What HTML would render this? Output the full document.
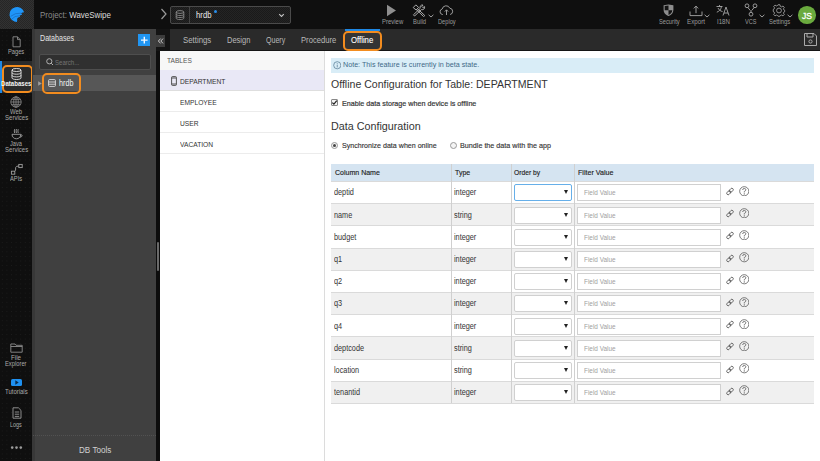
<!DOCTYPE html>
<html><head><meta charset="utf-8">
<style>
*{margin:0;padding:0;box-sizing:border-box}
html,body{width:820px;height:461px;overflow:hidden;background:#fff;font-family:"Liberation Sans",sans-serif}
.a{position:absolute}
.t{position:absolute;white-space:nowrap;line-height:1;transform-origin:0 0}
</style></head><body>
<div class="a" style="left:0;top:0;width:820px;height:29px;background:#0f0f0f"></div>
<div class="a" style="left:0;top:0;width:34px;height:29px;background:repeating-conic-gradient(#323232 0 25%,#262626 0 50%) 0 0/2px 2px"></div>
<svg class="a" style="left:0;top:0" width="34" height="29" viewBox="0 0 34 29">
<path d="M24.1 12.2 A7.5 7.5 0 1 0 17 22 L17.3 18.2 Q18.5 17.2 20.2 17.1 L19.6 15.8 Q20.8 14.9 22.2 14.8 L21.2 13.2 Q22.5 12.3 24.1 12.2 Z" fill="#1f95f8"/>
<path d="M21.2 13.2 Q15 12.6 10.6 16.4 M19.6 15.8 Q14.6 15.6 11.6 19.2" stroke="#1769bd" stroke-width="0.7" fill="none"/></svg>
<div class="t" style="left:39.80px;top:10.68px;font-size:9px;color:#8a8a8a;transform:scaleX(0.885)">Project: <span style="color:#dcdcdc">WaveSwipe</span></div>
<svg class="a" style="left:160px;top:8px" width="8" height="12" viewBox="0 0 8 12"><path d="M1.5 1 L6 6 L1.5 11" stroke="#9a9a9a" stroke-width="1.2" fill="none"/></svg>
<div class="a" style="left:170px;top:6px;width:121px;height:18px;border:1px solid #4a4a4a;border-radius:2px;background:repeating-conic-gradient(#242424 0 25%,#1a1a1a 0 50%) 0 0/2px 2px"></div>
<div class="a" style="left:189px;top:7px;width:1px;height:16px;background:#444"></div>
<svg class="a" style="left:175px;top:10px" width="10" height="10" viewBox="0 0 10 10"><g stroke="#8a8a8a" stroke-width="0.9" fill="none"><ellipse cx="5" cy="2" rx="3.8" ry="1.4"/><path d="M1.2 2v6.2c0 .8 1.7 1.4 3.8 1.4s3.8-.6 3.8-1.4V2M1.2 4.2c0 .8 1.7 1.4 3.8 1.4s3.8-.6 3.8-1.4M1.2 6.2c0 .8 1.7 1.4 3.8 1.4s3.8-.6 3.8-1.4"/></g></svg>
<div class="t" style="left:195.80px;top:11.08px;font-size:9px;color:#e8e8e8;transform:scaleX(0.861)">hrdb</div>
<div class="a" style="left:213.8px;top:10px;width:3px;height:3px;border-radius:50%;background:#2b8ee8"></div>
<svg class="a" style="left:278px;top:13px" width="7" height="5" viewBox="0 0 7 5"><path d="M1.2 1.2 L3.5 3.5 L5.8 1.2" stroke="#c8c8c8" stroke-width="1.1" fill="none"/></svg>
<svg class="a" style="left:386px;top:4px" width="11" height="13" viewBox="0 0 11 13"><path d="M1 0.8 L10 6.5 L1 12.2 Z" fill="#8f8f8f"/></svg>
<div class="t" style="left:381.60px;top:19.01px;font-size:6.6px;color:#9c9c9c;transform:scaleX(0.903)">Preview</div>
<svg class="a" style="left:412px;top:4px" width="15" height="13" viewBox="0 0 15 13"><g stroke="#a8a8a8" stroke-width="1" fill="none" stroke-linejoin="round"><path d="M5 4.2 L12.8 11.6 L11.6 12.6 L4 5.2"/><path d="M1.2 3.6 L3.8 0.9 L6.6 3.4 L4.2 6 Z"/><path d="M1.4 10.8 L8.2 4.4 M2.6 12 L9.4 5.6 M1.4 10.8 L2.6 12"/><path d="M8.2 4.4 C7.4 2.4 9 0.6 11 1 L9.8 2.6 L10.8 3.6 L12.6 2.6 C13 4.6 11.4 6.2 9.4 5.6"/></g></svg>
<svg class="a" style="left:428px;top:14px" width="6" height="4" viewBox="0 0 6 4"><path d="M0.6 0.8 L3 3 L5.4 0.8" stroke="#aaa" stroke-width="0.9" fill="none"/></svg>
<div class="t" style="left:412.70px;top:19.01px;font-size:6.6px;color:#9c9c9c;transform:scaleX(0.887)">Build</div>
<svg class="a" style="left:439px;top:4px" width="15" height="12" viewBox="0 0 15 12"><g stroke="#a8a8a8" stroke-width="0.9" fill="none"><path d="M4 10.5 H3.5 A2.8 2.8 0 0 1 3.2 5 A4 4 0 0 1 10.8 4.2 A3.2 3.2 0 0 1 11.2 10.5 H11"/><path d="M7.5 11 V6 M5.8 7.6 L7.5 5.8 L9.2 7.6"/></g></svg>
<div class="t" style="left:437.70px;top:19.01px;font-size:6.6px;color:#9c9c9c;transform:scaleX(0.862)">Deploy</div>
<svg class="a" style="left:662.5px;top:3.8px" width="11" height="12.5" viewBox="0 0 11 12.5"><path d="M0.6 1.2 L5.5 0.4 L10.4 1.2 V6 C10.4 9 8.2 11 5.5 12.1 C2.8 11 0.6 9 0.6 6 Z" fill="#8e8e8e"/><path d="M1.7 2.1 L5.5 1.6 V6.2 H1.7 Z M5.5 6.2 H9.3 C9.1 8.6 7.4 10.2 5.5 11 Z" fill="#141414"/></svg>
<div class="t" style="left:658.70px;top:19.01px;font-size:6.6px;color:#9c9c9c;transform:scaleX(0.869)">Security</div>
<svg class="a" style="left:689px;top:5px" width="14" height="12" viewBox="0 0 14 12"><g stroke="#a8a8a8" stroke-width="0.9" fill="none"><path d="M1 6.5 V10.6 H13 V6.5"/><path d="M7 8.2 V1.2 M4.8 3.4 L7 1.1 L9.2 3.4"/></g></svg>
<svg class="a" style="left:704px;top:14px" width="6" height="4" viewBox="0 0 6 4"><path d="M0.6 0.8 L3 3 L5.4 0.8" stroke="#aaa" stroke-width="0.9" fill="none"/></svg>
<div class="t" style="left:686.90px;top:19.01px;font-size:6.6px;color:#9c9c9c;transform:scaleX(0.941)">Export</div>
<svg class="a" style="left:716px;top:4px" width="14" height="12" viewBox="0 0 14 12"><g stroke="#a8a8a8" stroke-width="0.9" fill="none"><path d="M0.5 2.5 H6.5 M3.5 1 V2.5 M5.5 2.5 C5 5.5 3 7.5 0.8 8.2 M2 4 C3 6 4.5 7.2 6.5 7.5"/><path d="M7 11.5 L10 3 L13 11.5 M8 9 H12"/></g></svg>
<div class="t" style="left:716.70px;top:19.01px;font-size:6.6px;color:#9c9c9c;transform:scaleX(0.925)">I18N</div>
<svg class="a" style="left:744px;top:3px" width="14" height="14" viewBox="0 0 14 14"><g stroke="#a8a8a8" stroke-width="0.9" fill="none"><circle cx="3" cy="2.8" r="1.9"/><circle cx="11" cy="2.8" r="1.9"/><circle cx="7" cy="11.2" r="1.9"/><path d="M3.8 4.5 L6.3 7.5 M10.2 4.5 L7.7 7.5 M7 7.5 V9.3"/></g></svg>
<svg class="a" style="left:759px;top:14px" width="6" height="4" viewBox="0 0 6 4"><path d="M0.6 0.8 L3 3 L5.4 0.8" stroke="#aaa" stroke-width="0.9" fill="none"/></svg>
<div class="t" style="left:745.40px;top:19.01px;font-size:6.6px;color:#9c9c9c;transform:scaleX(0.847)">VCS</div>
<svg class="a" style="left:772px;top:4px" width="14" height="13" viewBox="0 0 14 14"><g stroke="#a8a8a8" stroke-width="0.9" fill="none"><path d="M6 0.8 H8 L8.4 2.5 L9.8 3.1 L11.3 2.2 L12.7 3.6 L11.8 5.1 L12.4 6.5 L13.2 7 V8 L12.4 8.5 L11.8 9.9 L12.7 11.4 L11.3 12.8 L9.8 11.9 L8.4 12.5 L8 13.2 H6 L5.6 12.5 L4.2 11.9 L2.7 12.8 L1.3 11.4 L2.2 9.9 L1.6 8.5 L0.8 8 V6 L1.6 5.5 L2.2 4.1 L1.3 2.6 L2.7 1.2 L4.2 2.1 L5.6 1.5 Z"/><circle cx="7" cy="7" r="2.6"/></g></svg>
<svg class="a" style="left:787px;top:14px" width="6" height="4" viewBox="0 0 6 4"><path d="M0.6 0.8 L3 3 L5.4 0.8" stroke="#aaa" stroke-width="0.9" fill="none"/></svg>
<div class="t" style="left:769.20px;top:19.01px;font-size:6.6px;color:#9c9c9c;transform:scaleX(0.889)">Settings</div>
<div class="a" style="left:798px;top:6px;width:17.5px;height:17.5px;border-radius:50%;background:#6aaa3e"></div>
<div class="t" style="left:802.00px;top:10.97px;font-size:9.6px;color:#fff;transform:scaleX(0.889);-webkit-text-stroke:0.3px #fff">JS</div>
<div class="a" style="left:0;top:29px;width:32px;height:432px;background:#0f0f0f radial-gradient(circle,#1c1c1c 0.7px,transparent 0.9px) 0 0/4.6px 4.6px"></div>
<div class="a" style="left:0;top:61px;width:32px;height:32px;background:#2b2b2b"></div>
<div class="a" style="left:0;top:61px;width:2px;height:32px;background:#1e88e5"></div>
<svg class="a" style="left:11.5px;top:36px" width="9" height="11.5" viewBox="0 0 9 11.5"><path d="M1 0.8 H5.5 L8.2 3.6 V10.8 H1 Z M5.5 0.8 V3.6 H8.2" stroke="#8c8c8c" stroke-width="0.9" fill="none"/></svg>
<div class="t" style="left:8.05px;top:48.21px;font-size:7.2px;color:#ababab;transform:scaleX(0.794)">Pages</div>
<svg class="a" style="left:11px;top:68px" width="11" height="12" viewBox="0 0 11 12"><g stroke="#e8e8e8" stroke-width="0.9" fill="none"><ellipse cx="5.5" cy="2" rx="4.5" ry="1.5"/><path d="M1 2 V10 C1 10.8 3 11.5 5.5 11.5 S10 10.8 10 10 V2 M1 4.7 C1 5.5 3 6.2 5.5 6.2 S10 5.5 10 4.7 M1 7.4 C1 8.2 3 8.9 5.5 8.9 S10 8.2 10 7.4"/></g></svg>
<div class="a" style="left:1.5px;top:64.5px;width:31px;height:28.5px;border:2px solid #f28c1f;border-radius:5px"></div>
<div class="t" style="left:1.05px;top:80.31px;font-size:7.2px;color:#f4f4f4;font-weight:bold;transform:scaleX(0.848)">Databases</div>
<svg class="a" style="left:10px;top:96px" width="12" height="12" viewBox="0 0 12 12"><g stroke="#8c8c8c" stroke-width="0.8" fill="none"><circle cx="6" cy="6" r="5.2"/><ellipse cx="6" cy="6" rx="2.3" ry="5.2"/><path d="M0.8 6 H11.2 M1.6 3.3 H10.4 M1.6 8.7 H10.4 M6 0.8 V11.2"/></g></svg>
<div class="t" style="left:10.30px;top:108.01px;font-size:7.2px;color:#ababab;transform:scaleX(0.819)">Web</div>
<div class="t" style="left:4.55px;top:114.31px;font-size:7.2px;color:#ababab;transform:scaleX(0.840)">Services</div>
<svg class="a" style="left:10px;top:128px" width="14" height="12" viewBox="0 0 14 12"><g stroke="#a0a0a0" stroke-width="0.9" fill="none"><path d="M2 6.3 H10.8 C10.8 9 8.8 10.8 6.4 10.8 S2 9 2 6.3 Z M10.6 7 C12 6.6 12.8 7.6 11.6 8.6 L9.8 9.4"/><path d="M4.6 1.2 Q4 2.8 4.6 5 M6.4 1 Q5.8 2.8 6.4 5 M8.2 1.2 Q7.6 2.8 8.2 5"/></g></svg>
<div class="t" style="left:10.30px;top:139.91px;font-size:7.2px;color:#ababab;transform:scaleX(0.790)">Java</div>
<div class="t" style="left:4.55px;top:145.81px;font-size:7.2px;color:#ababab;transform:scaleX(0.840)">Services</div>
<svg class="a" style="left:10px;top:163px" width="13" height="13" viewBox="0 0 13 13"><g stroke="#a0a0a0" stroke-width="0.9" fill="none"><rect x="1.4" y="8.2" width="3.4" height="3"/><rect x="8.8" y="1.4" width="3.4" height="3.2"/><path d="M4.8 8.2 L5.6 7.2 V4.6 Q5.8 3 8.8 3"/></g></svg>
<div class="t" style="left:10.05px;top:174.71px;font-size:7.2px;color:#ababab;transform:scaleX(0.802)">APIs</div>
<svg class="a" style="left:10px;top:343px" width="13" height="10" viewBox="0 0 13 10"><path d="M0.8 1 H5 L6 2.3 H12.2 V9.2 H0.8 Z M0.8 3.5 H12.2" stroke="#8c8c8c" stroke-width="0.9" fill="none"/></svg>
<div class="t" style="left:11.30px;top:354.21px;font-size:7.2px;color:#ababab;transform:scaleX(0.863)">File</div>
<div class="t" style="left:5.30px;top:360.01px;font-size:7.2px;color:#ababab;transform:scaleX(0.804)">Explorer</div>
<div class="a" style="left:11px;top:378.5px;width:11px;height:7.5px;border-radius:1.5px;background:#1e90f0"></div>
<svg class="a" style="left:15px;top:380px" width="4" height="5" viewBox="0 0 4 5"><path d="M0.3 0.3 L3.7 2.5 L0.3 4.7 Z" fill="#0b2b4a"/></svg>
<div class="t" style="left:4.80px;top:388.21px;font-size:7.2px;color:#ababab;transform:scaleX(0.830)">Tutorials</div>
<svg class="a" style="left:11.5px;top:407px" width="10" height="12" viewBox="0 0 10 12"><g stroke="#9a9a9a" stroke-width="0.9" fill="none"><path d="M1 0.8 H6.4 L9 3.4 V11.2 H1 Z"/><path d="M2.8 5 H7.2 M2.8 7.2 H7.2 M2.8 9.4 H7.2"/></g></svg>
<div class="t" style="left:10.30px;top:420.71px;font-size:7.2px;color:#ababab;transform:scaleX(0.750)">Logs</div>
<svg class="a" style="left:10px;top:445px" width="13" height="5" viewBox="0 0 13 5"><g fill="#9c9c9c"><circle cx="2.2" cy="2.6" r="1.3"/><circle cx="6.5" cy="2.6" r="1.3"/><circle cx="10.8" cy="2.6" r="1.3"/></g></svg>
<div class="a" style="left:32px;top:29px;width:124px;height:432px;background:#404040;border-left:3px solid #383838"></div>
<div class="t" style="left:39.90px;top:34.15px;font-size:8.8px;color:#e4e4e4;transform:scaleX(0.811)">Databases</div>
<div class="a" style="left:137.6px;top:33.8px;width:12.6px;height:12.3px;background:#2196f3"></div>
<svg class="a" style="left:137.6px;top:33.8px" width="12.6" height="12.3" viewBox="0 0 12.6 12.3"><path d="M6.3 2.8 V9.5 M3 6.15 H9.6" stroke="#f4f8ff" stroke-width="1.4"/></svg>
<div class="a" style="left:39.4px;top:53.7px;width:111.6px;height:16.2px;border:1px solid #4e4e4e;border-radius:2px;background:#303030"></div>
<svg class="a" style="left:45.5px;top:58px" width="7.5" height="7.5" viewBox="0 0 7.5 7.5"><g stroke="#b0b0b0" stroke-width="1" fill="none"><circle cx="3.3" cy="3.3" r="2.6"/><path d="M5.2 5.2 L7 7"/></g></svg>
<div class="t" style="left:54.80px;top:59.17px;font-size:7.6px;color:#747474;transform:scaleX(0.799)">Search...</div>
<div class="a" style="left:33px;top:75.3px;width:123px;height:15.4px;background:#575757"></div>
<svg class="a" style="left:37.8px;top:81px" width="4" height="5" viewBox="0 0 4 5"><path d="M0.2 0.2 L3.8 2.5 L0.2 4.8 Z" fill="#a0a0a0"/></svg>
<svg class="a" style="left:48.3px;top:79.2px" width="8" height="8" viewBox="0 0 8 8"><g stroke="#ddd" stroke-width="0.9" fill="none"><rect x="0.6" y="0.6" width="6.8" height="6.8" rx="0.8"/><path d="M0.6 3 H7.4 M0.6 5.2 H7.4"/></g></svg>
<div class="t" style="left:59.00px;top:79.32px;font-size:8.6px;color:#f2f2f2;transform:scaleX(0.838)">hrdb</div>
<div class="a" style="left:42px;top:73px;width:38.5px;height:20.8px;border:2px solid #f28c1f;border-radius:5px"></div>
<div class="a" style="left:33px;top:435px;width:123px;height:0;border-top:1px dotted #525252"></div>
<div class="t" style="left:78.70px;top:445.61px;font-size:9.2px;color:#d0d0d0;transform:scaleX(0.885)">DB Tools</div>
<div class="a" style="left:156px;top:29px;width:4px;height:432px;background:#0d0d0d"></div>
<div class="a" style="left:156.5px;top:242px;width:2px;height:29px;background:#6a6a6a;border-radius:1px"></div>
<div class="a" style="left:170px;top:29px;width:650px;height:22px;background:#2a2a2a;border-bottom:1.5px solid #151515"></div>
<div class="a" style="left:156px;top:29px;width:14px;height:22px;background:#141414"></div>
<div class="a" style="left:156px;top:35px;width:9px;height:11.8px;background:#3c3c3c"></div>
<svg class="a" style="left:156px;top:35px" width="9" height="12" viewBox="0 0 9 12"><path d="M4.6 3.6 L2.4 6 L4.6 8.4 M7 3.6 L4.8 6 L7 8.4" stroke="#c8c8c8" stroke-width="1" fill="none"/></svg>
<div class="t" style="left:182.80px;top:35.88px;font-size:9px;color:#b9b9b9;transform:scaleX(0.869)">Settings</div>
<div class="t" style="left:226.70px;top:35.88px;font-size:9px;color:#b9b9b9;transform:scaleX(0.832)">Design</div>
<div class="t" style="left:265.60px;top:35.88px;font-size:9px;color:#b9b9b9;transform:scaleX(0.784)">Query</div>
<div class="t" style="left:300.70px;top:35.88px;font-size:9px;color:#b9b9b9;transform:scaleX(0.848)">Procedure</div>
<div class="a" style="left:345px;top:29px;width:35px;height:2px;background:#1e88e5"></div>
<div class="a" style="left:345px;top:31px;width:35px;height:19px;background:#343434"></div>
<div class="t" style="left:351.20px;top:35.88px;font-size:9px;color:#fff;transform:scaleX(0.859);-webkit-text-stroke:0.1px #fff">Offline</div>
<div class="a" style="left:343px;top:31px;width:39.2px;height:19.5px;border:2px solid #f28c1f;border-radius:5px"></div>
<svg class="a" style="left:803px;top:32px" width="15" height="15" viewBox="0 0 15 15"><g stroke="#aaa" stroke-width="1" fill="none"><path d="M1.5 1.5 H11 L13.5 4 V13.5 H1.5 Z"/><path d="M4 1.5 V5 H10 V1.5"/><circle cx="7.5" cy="9.5" r="1.6"/></g></svg>
<div class="a" style="left:160px;top:51px;width:165px;height:18.5px;background:#f7f7f7"></div>
<div class="t" style="left:167.40px;top:56.71px;font-size:7.9px;color:#555;transform:scaleX(0.836)">TABLES</div>
<div class="a" style="left:160px;top:69.5px;width:164px;height:21.5px;background:#e9e8f6;border-bottom:1px solid #dedede"></div>
<svg class="a" style="left:171px;top:76px" width="6" height="10" viewBox="0 0 6 10"><g stroke="#444" stroke-width="0.9" fill="none"><rect x="0.6" y="0.6" width="4.8" height="8.8" rx="0.8"/><path d="M0.6 2 H5.4 M0.6 8 H5.4"/></g></svg>
<div class="t" style="left:180.00px;top:78.11px;font-size:7.9px;color:#333;transform:scaleX(0.844)">DEPARTMENT</div>
<div class="a" style="left:160px;top:91px;width:164px;height:21px;border-bottom:1px solid #ececec"></div>
<div class="t" style="left:180.00px;top:98.81px;font-size:7.9px;color:#333;transform:scaleX(0.844)">EMPLOYEE</div>
<div class="a" style="left:160px;top:112px;width:164px;height:21px;border-bottom:1px solid #ececec"></div>
<div class="t" style="left:180.00px;top:119.91px;font-size:7.9px;color:#333;transform:scaleX(0.844)">USER</div>
<div class="a" style="left:160px;top:132.5px;width:164px;height:21px;border-bottom:1px solid #ececec"></div>
<div class="t" style="left:180.00px;top:140.91px;font-size:7.9px;color:#333;transform:scaleX(0.844)">VACATION</div>
<div class="a" style="left:324px;top:51px;width:1px;height:410px;background:#dcdcdc"></div>
<div class="a" style="left:331px;top:58px;width:483px;height:14.5px;background:#d9edf7"></div>
<svg class="a" style="left:332.5px;top:61px" width="8.5" height="8.5" viewBox="0 0 9 9"><g stroke="#5a7e96" stroke-width="0.8" fill="none"><circle cx="4.5" cy="4.5" r="3.8"/><path d="M4.5 3.8 V6.8 M4.5 2.2 V3"/></g></svg>
<div class="t" style="left:342.70px;top:61.40px;font-size:7.8px;color:#3f6a88;transform:scaleX(0.917)">Note: This feature is currently in beta state.</div>
<div class="t" style="left:331.00px;top:78.51px;font-size:11.8px;color:#333;transform:scaleX(0.894)">Offline Configuration for Table: DEPARTMENT</div>
<div class="a" style="left:331px;top:98.5px;width:7px;height:7px;border:1px solid #888;border-radius:1px;background:#f4f4f4"></div>
<svg class="a" style="left:331px;top:98.5px" width="7" height="7" viewBox="0 0 7 7"><path d="M1.3 3.6 L2.9 5.2 L5.8 1.6" stroke="#222" stroke-width="1.2" fill="none"/></svg>
<div class="t" style="left:341.50px;top:99.54px;font-size:8.1px;color:#333;transform:scaleX(0.887);-webkit-text-stroke:0.2px #333">Enable data storage when device is offline</div>
<div class="t" style="left:330.90px;top:121.11px;font-size:11.8px;color:#333;transform:scaleX(0.911)">Data Configuration</div>
<div class="a" style="left:331px;top:141.5px;width:7px;height:7px;border:1px solid #999;border-radius:50%;background:#f4f4f4"></div>
<div class="a" style="left:333px;top:143.5px;width:3px;height:3px;border-radius:50%;background:#444"></div>
<div class="t" style="left:342.00px;top:142.34px;font-size:8.1px;color:#333;transform:scaleX(0.876);-webkit-text-stroke:0.15px #333">Synchronize data when online</div>
<div class="a" style="left:450px;top:141.5px;width:7px;height:7px;border:1px solid #999;border-radius:50%;background:#f4f4f4"></div>
<div class="t" style="left:460.20px;top:142.34px;font-size:8.1px;color:#333;transform:scaleX(0.888);-webkit-text-stroke:0.15px #333">Bundle the data with the app</div>
<div class="a" style="left:331px;top:164px;width:483px;height:17.5px;background:#d5e4f1"></div>
<div class="t" style="left:334.70px;top:169.04px;font-size:8.1px;color:#222;transform:scaleX(0.867);-webkit-text-stroke:0.15px #222">Column Name</div>
<div class="t" style="left:454.60px;top:169.04px;font-size:8.1px;color:#222;transform:scaleX(0.867);-webkit-text-stroke:0.15px #222">Type</div>
<div class="t" style="left:514.40px;top:169.04px;font-size:8.1px;color:#222;transform:scaleX(0.829);-webkit-text-stroke:0.15px #222">Order by</div>
<div class="t" style="left:577.80px;top:169.04px;font-size:8.1px;color:#222;transform:scaleX(0.877);-webkit-text-stroke:0.15px #222">Filter Value</div>
<div class="a" style="left:331px;top:181.0px;width:483px;height:23px;border-top:1px solid #dadada;background:#fff"></div>
<div class="t" style="left:333.90px;top:188.40px;font-size:8.5px;color:#333;transform:scaleX(0.858)">deptid</div>
<div class="t" style="left:453.90px;top:188.40px;font-size:8.5px;color:#333;transform:scaleX(0.858)">integer</div>
<div class="a" style="left:514px;top:184.3px;width:57.5px;height:17px;border:1px solid #66afe9;border-radius:2px;background:#fff"></div>
<div class="a" style="left:563.5px;top:190.3px;width:0;height:0;border-left:2.5px solid transparent;border-right:2.5px solid transparent;border-top:4px solid #222"></div>
<div class="a" style="left:577.3px;top:184.3px;width:143.7px;height:17px;border:1px solid #d0d0d0;background:#fff"></div>
<div class="t" style="left:583.80px;top:189.34px;font-size:7.4px;color:#a0a0a0;transform:scaleX(0.867)">Field Value</div>
<svg class="a" style="left:725px;top:187.0px" width="10" height="9" viewBox="0 0 10 9"><g transform="rotate(-45 5 4.5)" stroke="#555" stroke-width="0.85" fill="none"><rect x="1" y="3.1" width="4.6" height="2.8" rx="1.4"/><rect x="4.4" y="3.1" width="4.6" height="2.8" rx="1.4"/></g></svg>
<svg class="a" style="left:738.5px;top:185.5px" width="10.5" height="10.5" viewBox="0 0 11 11"><g stroke="#555" stroke-width="0.8" fill="none"><circle cx="5.5" cy="5.5" r="4.8"/><path d="M3.8 4.2 Q3.8 2.6 5.5 2.6 Q7.2 2.6 7.2 4 Q7.2 5 5.5 5.8 V6.8"/></g><circle cx="5.5" cy="8.3" r="0.6" fill="#555"/></svg>
<div class="a" style="left:331px;top:203.2px;width:483px;height:23px;border-top:1px solid #dadada;background:#f0f0f0"></div>
<div class="t" style="left:333.90px;top:210.60px;font-size:8.5px;color:#333;transform:scaleX(0.858)">name</div>
<div class="t" style="left:453.90px;top:210.60px;font-size:8.5px;color:#333;transform:scaleX(0.858)">string</div>
<div class="a" style="left:514px;top:206.5px;width:57.5px;height:17px;border:1px solid #d0d0d0;border-radius:2px;background:#fff"></div>
<div class="a" style="left:563.5px;top:212.5px;width:0;height:0;border-left:2.5px solid transparent;border-right:2.5px solid transparent;border-top:4px solid #222"></div>
<div class="a" style="left:577.3px;top:206.5px;width:143.7px;height:17px;border:1px solid #d0d0d0;background:#fff"></div>
<div class="t" style="left:583.80px;top:211.54px;font-size:7.4px;color:#a0a0a0;transform:scaleX(0.867)">Field Value</div>
<svg class="a" style="left:725px;top:209.2px" width="10" height="9" viewBox="0 0 10 9"><g transform="rotate(-45 5 4.5)" stroke="#555" stroke-width="0.85" fill="none"><rect x="1" y="3.1" width="4.6" height="2.8" rx="1.4"/><rect x="4.4" y="3.1" width="4.6" height="2.8" rx="1.4"/></g></svg>
<svg class="a" style="left:738.5px;top:207.7px" width="10.5" height="10.5" viewBox="0 0 11 11"><g stroke="#555" stroke-width="0.8" fill="none"><circle cx="5.5" cy="5.5" r="4.8"/><path d="M3.8 4.2 Q3.8 2.6 5.5 2.6 Q7.2 2.6 7.2 4 Q7.2 5 5.5 5.8 V6.8"/></g><circle cx="5.5" cy="8.3" r="0.6" fill="#555"/></svg>
<div class="a" style="left:331px;top:225.4px;width:483px;height:23px;border-top:1px solid #dadada;background:#fff"></div>
<div class="t" style="left:333.90px;top:232.80px;font-size:8.5px;color:#333;transform:scaleX(0.858)">budget</div>
<div class="t" style="left:453.90px;top:232.80px;font-size:8.5px;color:#333;transform:scaleX(0.858)">integer</div>
<div class="a" style="left:514px;top:228.7px;width:57.5px;height:17px;border:1px solid #d0d0d0;border-radius:2px;background:#fff"></div>
<div class="a" style="left:563.5px;top:234.7px;width:0;height:0;border-left:2.5px solid transparent;border-right:2.5px solid transparent;border-top:4px solid #222"></div>
<div class="a" style="left:577.3px;top:228.7px;width:143.7px;height:17px;border:1px solid #d0d0d0;background:#fff"></div>
<div class="t" style="left:583.80px;top:233.74px;font-size:7.4px;color:#a0a0a0;transform:scaleX(0.867)">Field Value</div>
<svg class="a" style="left:725px;top:231.4px" width="10" height="9" viewBox="0 0 10 9"><g transform="rotate(-45 5 4.5)" stroke="#555" stroke-width="0.85" fill="none"><rect x="1" y="3.1" width="4.6" height="2.8" rx="1.4"/><rect x="4.4" y="3.1" width="4.6" height="2.8" rx="1.4"/></g></svg>
<svg class="a" style="left:738.5px;top:229.9px" width="10.5" height="10.5" viewBox="0 0 11 11"><g stroke="#555" stroke-width="0.8" fill="none"><circle cx="5.5" cy="5.5" r="4.8"/><path d="M3.8 4.2 Q3.8 2.6 5.5 2.6 Q7.2 2.6 7.2 4 Q7.2 5 5.5 5.8 V6.8"/></g><circle cx="5.5" cy="8.3" r="0.6" fill="#555"/></svg>
<div class="a" style="left:331px;top:247.6px;width:483px;height:23px;border-top:1px solid #dadada;background:#f0f0f0"></div>
<div class="t" style="left:333.90px;top:255.00px;font-size:8.5px;color:#333;transform:scaleX(0.858)">q1</div>
<div class="t" style="left:453.90px;top:255.00px;font-size:8.5px;color:#333;transform:scaleX(0.858)">integer</div>
<div class="a" style="left:514px;top:250.9px;width:57.5px;height:17px;border:1px solid #d0d0d0;border-radius:2px;background:#fff"></div>
<div class="a" style="left:563.5px;top:256.9px;width:0;height:0;border-left:2.5px solid transparent;border-right:2.5px solid transparent;border-top:4px solid #222"></div>
<div class="a" style="left:577.3px;top:250.9px;width:143.7px;height:17px;border:1px solid #d0d0d0;background:#fff"></div>
<div class="t" style="left:583.80px;top:255.94px;font-size:7.4px;color:#a0a0a0;transform:scaleX(0.867)">Field Value</div>
<svg class="a" style="left:725px;top:253.6px" width="10" height="9" viewBox="0 0 10 9"><g transform="rotate(-45 5 4.5)" stroke="#555" stroke-width="0.85" fill="none"><rect x="1" y="3.1" width="4.6" height="2.8" rx="1.4"/><rect x="4.4" y="3.1" width="4.6" height="2.8" rx="1.4"/></g></svg>
<svg class="a" style="left:738.5px;top:252.1px" width="10.5" height="10.5" viewBox="0 0 11 11"><g stroke="#555" stroke-width="0.8" fill="none"><circle cx="5.5" cy="5.5" r="4.8"/><path d="M3.8 4.2 Q3.8 2.6 5.5 2.6 Q7.2 2.6 7.2 4 Q7.2 5 5.5 5.8 V6.8"/></g><circle cx="5.5" cy="8.3" r="0.6" fill="#555"/></svg>
<div class="a" style="left:331px;top:269.8px;width:483px;height:23px;border-top:1px solid #dadada;background:#fff"></div>
<div class="t" style="left:333.90px;top:277.20px;font-size:8.5px;color:#333;transform:scaleX(0.858)">q2</div>
<div class="t" style="left:453.90px;top:277.20px;font-size:8.5px;color:#333;transform:scaleX(0.858)">integer</div>
<div class="a" style="left:514px;top:273.1px;width:57.5px;height:17px;border:1px solid #d0d0d0;border-radius:2px;background:#fff"></div>
<div class="a" style="left:563.5px;top:279.1px;width:0;height:0;border-left:2.5px solid transparent;border-right:2.5px solid transparent;border-top:4px solid #222"></div>
<div class="a" style="left:577.3px;top:273.1px;width:143.7px;height:17px;border:1px solid #d0d0d0;background:#fff"></div>
<div class="t" style="left:583.80px;top:278.14px;font-size:7.4px;color:#a0a0a0;transform:scaleX(0.867)">Field Value</div>
<svg class="a" style="left:725px;top:275.8px" width="10" height="9" viewBox="0 0 10 9"><g transform="rotate(-45 5 4.5)" stroke="#555" stroke-width="0.85" fill="none"><rect x="1" y="3.1" width="4.6" height="2.8" rx="1.4"/><rect x="4.4" y="3.1" width="4.6" height="2.8" rx="1.4"/></g></svg>
<svg class="a" style="left:738.5px;top:274.3px" width="10.5" height="10.5" viewBox="0 0 11 11"><g stroke="#555" stroke-width="0.8" fill="none"><circle cx="5.5" cy="5.5" r="4.8"/><path d="M3.8 4.2 Q3.8 2.6 5.5 2.6 Q7.2 2.6 7.2 4 Q7.2 5 5.5 5.8 V6.8"/></g><circle cx="5.5" cy="8.3" r="0.6" fill="#555"/></svg>
<div class="a" style="left:331px;top:292.0px;width:483px;height:23px;border-top:1px solid #dadada;background:#f0f0f0"></div>
<div class="t" style="left:333.90px;top:299.40px;font-size:8.5px;color:#333;transform:scaleX(0.858)">q3</div>
<div class="t" style="left:453.90px;top:299.40px;font-size:8.5px;color:#333;transform:scaleX(0.858)">integer</div>
<div class="a" style="left:514px;top:295.3px;width:57.5px;height:17px;border:1px solid #d0d0d0;border-radius:2px;background:#fff"></div>
<div class="a" style="left:563.5px;top:301.3px;width:0;height:0;border-left:2.5px solid transparent;border-right:2.5px solid transparent;border-top:4px solid #222"></div>
<div class="a" style="left:577.3px;top:295.3px;width:143.7px;height:17px;border:1px solid #d0d0d0;background:#fff"></div>
<div class="t" style="left:583.80px;top:300.34px;font-size:7.4px;color:#a0a0a0;transform:scaleX(0.867)">Field Value</div>
<svg class="a" style="left:725px;top:298.0px" width="10" height="9" viewBox="0 0 10 9"><g transform="rotate(-45 5 4.5)" stroke="#555" stroke-width="0.85" fill="none"><rect x="1" y="3.1" width="4.6" height="2.8" rx="1.4"/><rect x="4.4" y="3.1" width="4.6" height="2.8" rx="1.4"/></g></svg>
<svg class="a" style="left:738.5px;top:296.5px" width="10.5" height="10.5" viewBox="0 0 11 11"><g stroke="#555" stroke-width="0.8" fill="none"><circle cx="5.5" cy="5.5" r="4.8"/><path d="M3.8 4.2 Q3.8 2.6 5.5 2.6 Q7.2 2.6 7.2 4 Q7.2 5 5.5 5.8 V6.8"/></g><circle cx="5.5" cy="8.3" r="0.6" fill="#555"/></svg>
<div class="a" style="left:331px;top:314.2px;width:483px;height:23px;border-top:1px solid #dadada;background:#fff"></div>
<div class="t" style="left:333.90px;top:321.60px;font-size:8.5px;color:#333;transform:scaleX(0.858)">q4</div>
<div class="t" style="left:453.90px;top:321.60px;font-size:8.5px;color:#333;transform:scaleX(0.858)">integer</div>
<div class="a" style="left:514px;top:317.5px;width:57.5px;height:17px;border:1px solid #d0d0d0;border-radius:2px;background:#fff"></div>
<div class="a" style="left:563.5px;top:323.5px;width:0;height:0;border-left:2.5px solid transparent;border-right:2.5px solid transparent;border-top:4px solid #222"></div>
<div class="a" style="left:577.3px;top:317.5px;width:143.7px;height:17px;border:1px solid #d0d0d0;background:#fff"></div>
<div class="t" style="left:583.80px;top:322.54px;font-size:7.4px;color:#a0a0a0;transform:scaleX(0.867)">Field Value</div>
<svg class="a" style="left:725px;top:320.2px" width="10" height="9" viewBox="0 0 10 9"><g transform="rotate(-45 5 4.5)" stroke="#555" stroke-width="0.85" fill="none"><rect x="1" y="3.1" width="4.6" height="2.8" rx="1.4"/><rect x="4.4" y="3.1" width="4.6" height="2.8" rx="1.4"/></g></svg>
<svg class="a" style="left:738.5px;top:318.7px" width="10.5" height="10.5" viewBox="0 0 11 11"><g stroke="#555" stroke-width="0.8" fill="none"><circle cx="5.5" cy="5.5" r="4.8"/><path d="M3.8 4.2 Q3.8 2.6 5.5 2.6 Q7.2 2.6 7.2 4 Q7.2 5 5.5 5.8 V6.8"/></g><circle cx="5.5" cy="8.3" r="0.6" fill="#555"/></svg>
<div class="a" style="left:331px;top:336.4px;width:483px;height:23px;border-top:1px solid #dadada;background:#f0f0f0"></div>
<div class="t" style="left:333.90px;top:343.80px;font-size:8.5px;color:#333;transform:scaleX(0.858)">deptcode</div>
<div class="t" style="left:453.90px;top:343.80px;font-size:8.5px;color:#333;transform:scaleX(0.858)">string</div>
<div class="a" style="left:514px;top:339.7px;width:57.5px;height:17px;border:1px solid #d0d0d0;border-radius:2px;background:#fff"></div>
<div class="a" style="left:563.5px;top:345.7px;width:0;height:0;border-left:2.5px solid transparent;border-right:2.5px solid transparent;border-top:4px solid #222"></div>
<div class="a" style="left:577.3px;top:339.7px;width:143.7px;height:17px;border:1px solid #d0d0d0;background:#fff"></div>
<div class="t" style="left:583.80px;top:344.74px;font-size:7.4px;color:#a0a0a0;transform:scaleX(0.867)">Field Value</div>
<svg class="a" style="left:725px;top:342.4px" width="10" height="9" viewBox="0 0 10 9"><g transform="rotate(-45 5 4.5)" stroke="#555" stroke-width="0.85" fill="none"><rect x="1" y="3.1" width="4.6" height="2.8" rx="1.4"/><rect x="4.4" y="3.1" width="4.6" height="2.8" rx="1.4"/></g></svg>
<svg class="a" style="left:738.5px;top:340.9px" width="10.5" height="10.5" viewBox="0 0 11 11"><g stroke="#555" stroke-width="0.8" fill="none"><circle cx="5.5" cy="5.5" r="4.8"/><path d="M3.8 4.2 Q3.8 2.6 5.5 2.6 Q7.2 2.6 7.2 4 Q7.2 5 5.5 5.8 V6.8"/></g><circle cx="5.5" cy="8.3" r="0.6" fill="#555"/></svg>
<div class="a" style="left:331px;top:358.6px;width:483px;height:23px;border-top:1px solid #dadada;background:#fff"></div>
<div class="t" style="left:333.90px;top:366.00px;font-size:8.5px;color:#333;transform:scaleX(0.858)">location</div>
<div class="t" style="left:453.90px;top:366.00px;font-size:8.5px;color:#333;transform:scaleX(0.858)">string</div>
<div class="a" style="left:514px;top:361.9px;width:57.5px;height:17px;border:1px solid #d0d0d0;border-radius:2px;background:#fff"></div>
<div class="a" style="left:563.5px;top:367.9px;width:0;height:0;border-left:2.5px solid transparent;border-right:2.5px solid transparent;border-top:4px solid #222"></div>
<div class="a" style="left:577.3px;top:361.9px;width:143.7px;height:17px;border:1px solid #d0d0d0;background:#fff"></div>
<div class="t" style="left:583.80px;top:366.94px;font-size:7.4px;color:#a0a0a0;transform:scaleX(0.867)">Field Value</div>
<svg class="a" style="left:725px;top:364.6px" width="10" height="9" viewBox="0 0 10 9"><g transform="rotate(-45 5 4.5)" stroke="#555" stroke-width="0.85" fill="none"><rect x="1" y="3.1" width="4.6" height="2.8" rx="1.4"/><rect x="4.4" y="3.1" width="4.6" height="2.8" rx="1.4"/></g></svg>
<svg class="a" style="left:738.5px;top:363.1px" width="10.5" height="10.5" viewBox="0 0 11 11"><g stroke="#555" stroke-width="0.8" fill="none"><circle cx="5.5" cy="5.5" r="4.8"/><path d="M3.8 4.2 Q3.8 2.6 5.5 2.6 Q7.2 2.6 7.2 4 Q7.2 5 5.5 5.8 V6.8"/></g><circle cx="5.5" cy="8.3" r="0.6" fill="#555"/></svg>
<div class="a" style="left:331px;top:380.8px;width:483px;height:23px;border-top:1px solid #dadada;background:#f0f0f0"></div>
<div class="t" style="left:333.90px;top:388.20px;font-size:8.5px;color:#333;transform:scaleX(0.858)">tenantid</div>
<div class="t" style="left:453.90px;top:388.20px;font-size:8.5px;color:#333;transform:scaleX(0.858)">integer</div>
<div class="a" style="left:514px;top:384.1px;width:57.5px;height:17px;border:1px solid #d0d0d0;border-radius:2px;background:#fff"></div>
<div class="a" style="left:563.5px;top:390.1px;width:0;height:0;border-left:2.5px solid transparent;border-right:2.5px solid transparent;border-top:4px solid #222"></div>
<div class="a" style="left:577.3px;top:384.1px;width:143.7px;height:17px;border:1px solid #d0d0d0;background:#fff"></div>
<div class="t" style="left:583.80px;top:389.14px;font-size:7.4px;color:#a0a0a0;transform:scaleX(0.867)">Field Value</div>
<svg class="a" style="left:725px;top:386.8px" width="10" height="9" viewBox="0 0 10 9"><g transform="rotate(-45 5 4.5)" stroke="#555" stroke-width="0.85" fill="none"><rect x="1" y="3.1" width="4.6" height="2.8" rx="1.4"/><rect x="4.4" y="3.1" width="4.6" height="2.8" rx="1.4"/></g></svg>
<svg class="a" style="left:738.5px;top:385.3px" width="10.5" height="10.5" viewBox="0 0 11 11"><g stroke="#555" stroke-width="0.8" fill="none"><circle cx="5.5" cy="5.5" r="4.8"/><path d="M3.8 4.2 Q3.8 2.6 5.5 2.6 Q7.2 2.6 7.2 4 Q7.2 5 5.5 5.8 V6.8"/></g><circle cx="5.5" cy="8.3" r="0.6" fill="#555"/></svg>
<div class="a" style="left:331px;top:403px;width:483px;height:1px;background:#dadada"></div>
<div class="a" style="left:451px;top:164px;width:1px;height:239px;background:#d0d0d0"></div>
<div class="a" style="left:511px;top:164px;width:1px;height:239px;background:#d0d0d0"></div>
<div class="a" style="left:574px;top:164px;width:1px;height:239px;background:#d0d0d0"></div>
</body></html>
